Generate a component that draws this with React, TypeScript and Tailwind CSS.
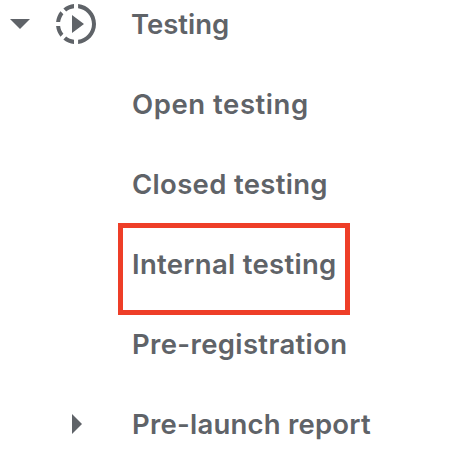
const rows = [
  { label: 'Testing', spacing: '-ml-px tracking-[0px]' },
  { label: 'Open testing', spacing: 'tracking-[0.56px]' },
  { label: 'Closed testing', spacing: 'tracking-[0.32px]' },
  { label: 'Internal testing', spacing: 'tracking-[0.3px]' },
  { label: 'Pre-registration', spacing: 'tracking-[0.35px]' },
  { label: 'Pre-launch report', spacing: 'tracking-[0.22px]' },
];

function SlowMotionIcon() {
  return (
    <svg className="ml-[22px] size-12" viewBox="0 0 24 24" fill="currentColor">
      <path d="M10 7.5v9l6-4.5zM11 4.07V2.05c-2.01.2-3.84 1-5.32 2.21L7.1 5.69c1.11-.86 2.44-1.44 3.9-1.62zM5.69 7.1L4.26 5.68C3.05 7.16 2.25 8.99 2.05 11h2.02c.18-1.46.76-2.79 1.62-3.9zM4.07 13H2.05c.2 2.01 1 3.84 2.21 5.32l1.43-1.43c-.86-1.1-1.44-2.43-1.62-3.89zm1.61 6.74C7.16 20.95 9 21.75 11 21.95v-2.02c-1.46-.18-2.79-.76-3.9-1.62l-1.42 1.43zM22 12c0 5.16-3.92 9.42-8.95 9.95v-2.02C16.97 19.41 20 16.05 20 12s-3.03-7.41-6.95-7.93V2.05C18.08 2.58 22 6.84 22 12z" />
    </svg>
  );
}

export default function App() {
  return (
    <nav className="relative h-[476px] w-[456px] overflow-hidden bg-white font-['Inter','Liberation_Sans',sans-serif] text-[#5f6368]">
      <ul className="-mt-4">
        {rows.map((row, i) => (
          <li key={row.label} className="flex h-20 items-center">
            <div className="flex w-[132px] shrink-0 items-center">
              {i === 0 && (
                <>
                  <svg className="ml-[10px]" width="20" height="10" fill="currentColor"><path d="M0 0h20L10 10z" /></svg>
                  <SlowMotionIcon />
                </>
              )}
              {i === 5 && <svg className="ml-[72px]" width="10" height="20" fill="currentColor"><path d="M0 0v20l10-10z" /></svg>}
            </div>
            <span className={`whitespace-nowrap pt-0.5 text-[27.5px] font-semibold ${row.spacing}`}>{row.label}</span>
          </li>
        ))}
      </ul>
      <div className="absolute left-[118px] top-[223px] h-[92px] w-[232px] border-[5px] border-[#ee3e28]" />
    </nav>
  );
}
